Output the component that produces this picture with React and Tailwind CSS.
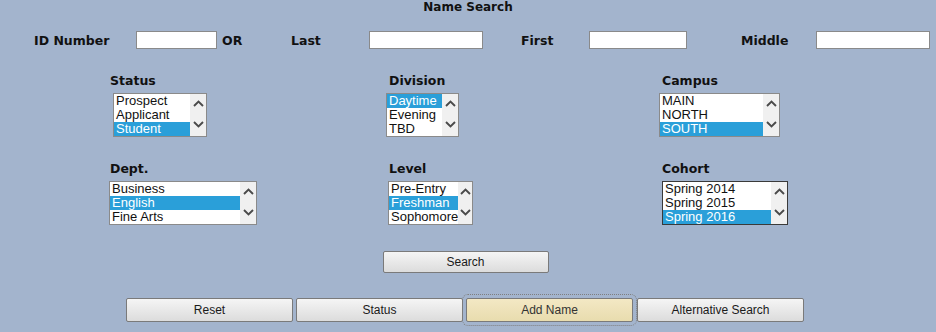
import React from "react";

const Chevron = ({ up }) => (
  <svg width="11" height="7" viewBox="0 0 11 7" className="block">
    <polyline
      points={up ? "1,6 5.5,1.5 10,6" : "1,1 5.5,5.5 10,1"}
      fill="none"
      stroke="#4a4a4a"
      strokeWidth="1.9"
    />
  </svg>
);

function ListBox({ options, selected, width, focused }) {
  return (
    <div
      className={`flex h-[44px] border bg-white ${focused ? "border-[#3a3a3a]" : "border-[#8a8a8a]"}`}
      style={{ width }}
    >
      <div className="flex-1 flex flex-col">
        {options.map((o) => (
          <div
            key={o}
            className={`h-[14px] leading-[14px] pl-[2px] text-[13px] font-['Liberation_Sans',Arial,sans-serif] whitespace-nowrap overflow-hidden ${
              o === selected ? "bg-[#2a9fd9] text-white" : "text-[#111]"
            }`}
          >
            {o}
          </div>
        ))}
      </div>
      <div className="w-[16px] bg-[#f0f0f0] flex flex-col items-center pt-[6px] gap-[14px]">
        <Chevron up />
        <Chevron />
      </div>
    </div>
  );
}

function Field({ label, options, selected, width, focused, labelMl = "ml-0", boxMl = "ml-0" }) {
  return (
    <div className="flex flex-col">
      <div className={`h-[21px] text-[12.5px] font-bold text-[#111] ${labelMl}`}>{label}</div>
      <div className={boxMl}>
        <ListBox options={options} selected={selected} width={width} focused={focused} />
      </div>
    </div>
  );
}

const btn =
  "h-[24px] w-[167px] border border-[#7a7a7a] rounded-[2px] text-[12px] text-[#1a1a1a] font-['Liberation_Sans',Arial,sans-serif] bg-gradient-to-b from-[#f5f5f5] to-[#dcdcdc]";

export default function App() {
  const inputCls = "h-[18px] border border-[#8a8a8a] bg-white";
  return (
    <div className="w-[936px] h-[332px] bg-[#a3b4cd] font-['DejaVu_Sans',Verdana,sans-serif] text-[#111] overflow-hidden">
      <div className="h-[14px] leading-[14px] text-center text-[12px] font-bold">Name Search</div>

      {/* Name row */}
      <div className="flex items-center h-[18px] mt-[17px] text-[12.5px] font-bold">
        <div className="ml-[34px] w-[102px] pt-[2px]">ID Number</div>
        <div className={`${inputCls} w-[81px]`} />
        <div className="ml-[5px] w-[69px] pt-[2px]">OR</div>
        <div className="w-[78px] pt-[2px]">Last</div>
        <div className={`${inputCls} w-[114px]`} />
        <div className="ml-[38px] w-[68px] pt-[2px]">First</div>
        <div className={`${inputCls} w-[98px]`} />
        <div className="ml-[54px] w-[75px] pt-[2px]">Middle</div>
        <div className={`${inputCls} w-[114px]`} />
      </div>

      {/* Status / Division / Campus */}
      <div className="grid grid-cols-[276px_273px_1fr] pl-[110px] mt-[23px]">
        <Field label="Status" options={["Prospect", "Applicant", "Student"]} selected="Student" width={94} boxMl="ml-[3px]" />
        <Field label="Division" options={["Daytime", "Evening", "TBD"]} selected="Daytime" width={73} labelMl="ml-[3px]" />
        <Field label="Campus" options={["MAIN", "NORTH", "SOUTH"]} selected="SOUTH" width={121} labelMl="ml-[3px]" />
      </div>

      {/* Dept / Level / Cohort */}
      <div className="grid grid-cols-[279px_274px_1fr] pl-[109px] mt-[23px]">
        <Field label="Dept." options={["Business", "English", "Fine Arts"]} selected="English" width={148} labelMl="ml-[1px]" />
        <Field label="Level" options={["Pre-Entry", "Freshman", "Sophomore"]} selected="Freshman" width={85} labelMl="ml-[1px]" />
        <Field label="Cohort" options={["Spring 2014", "Spring 2015", "Spring 2016"]} selected="Spring 2016" width={126} focused />
      </div>

      <div className="flex justify-center mt-[26px]">
        <button className={`${btn} !h-[22px] !w-[166px] ml-[-5px]`}>Search</button>
      </div>

      <div className="flex mt-[25px] ml-[126px] gap-[3px]">
        <button className={btn}>Reset</button>
        <button className={btn}>Status</button>
        <button className={`${btn} !from-[#f3e8c4] !to-[#e8dcae] text-[#333] outline outline-1 outline-dotted outline-[#7f7f7f] outline-offset-[3px]`}>
          Add Name
        </button>
        <button className={`${btn} ml-[1px]`}>Alternative Search</button>
      </div>
    </div>
  );
}
